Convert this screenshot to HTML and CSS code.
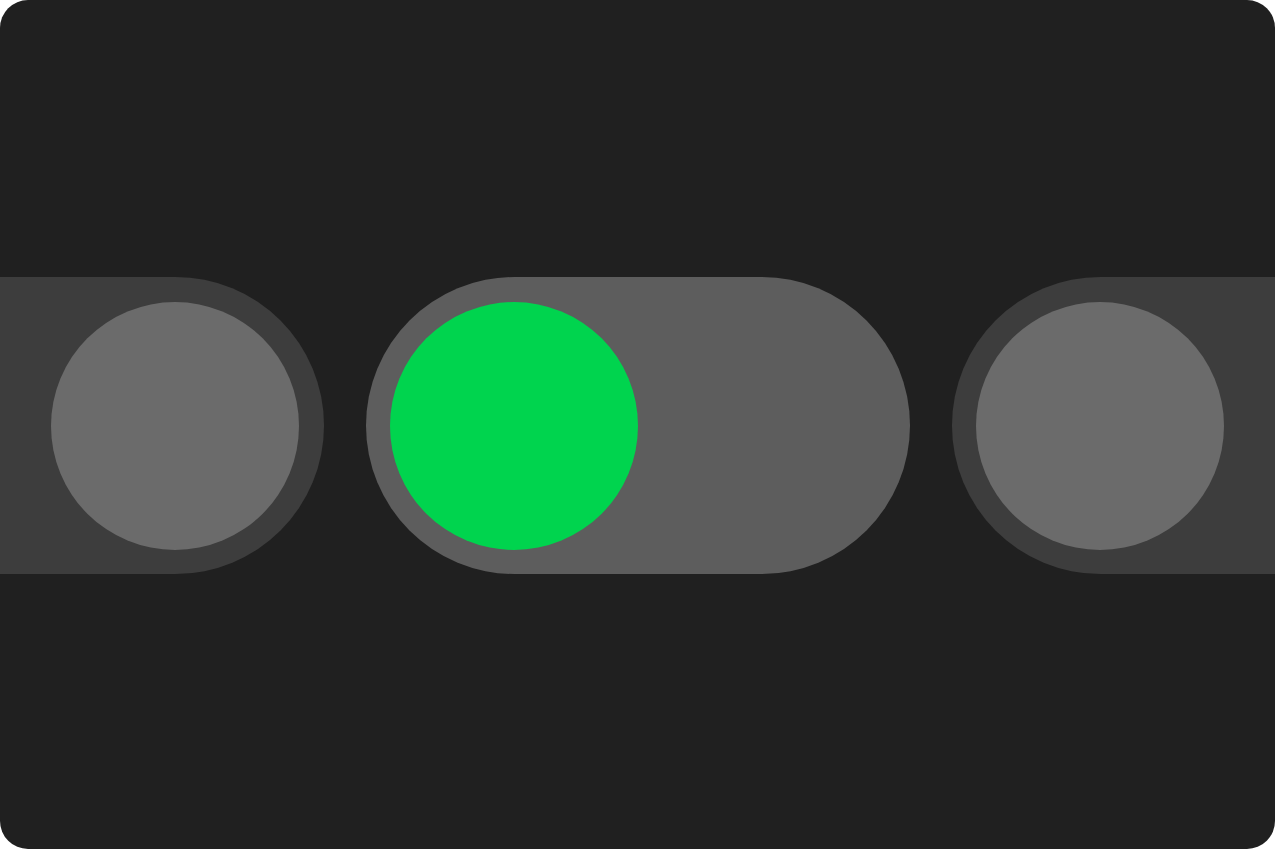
FILE: index.html
```html
<!DOCTYPE html>
<html>
<head>
<meta charset="utf-8">
<link rel="stylesheet" href="styles.css">
</head>
<body>
<div class="card">
  <div class="toggle toggle-dim toggle-right"><div class="knob knob-dim"></div></div>
  <div class="toggle toggle-active"><div class="knob knob-on"></div></div>
  <div class="toggle toggle-dim"><div class="knob knob-dim"></div></div>
</div>
</body>
</html>
```
FILE: styles.css
```css
html, body {
  margin: 0;
  padding: 0;
  background: #ffffff;
}
.card {
  box-sizing: border-box;
  width: 1275px;
  height: 849px;
  padding-top: 2px;
  background: #202020;
  border-radius: 28px;
  overflow: hidden;
  display: flex;
  align-items: center;
  justify-content: center;
  gap: 42px;
}
.toggle {
  flex: 0 0 544px;
  height: 297px;
  border-radius: 148.5px;
  box-sizing: border-box;
  padding: 24.5px;
  display: flex;
  align-items: center;
  justify-content: flex-start;
}
.toggle-right {
  justify-content: flex-end;
}
.toggle-dim {
  background: #3d3d3d;
}
.toggle-active {
  background: #5d5d5d;
}
.knob {
  width: 248px;
  height: 248px;
  border-radius: 50%;
}
.knob-dim {
  background: #6b6b6b;
}
.knob-on {
  background: #00d44e;
}
```
